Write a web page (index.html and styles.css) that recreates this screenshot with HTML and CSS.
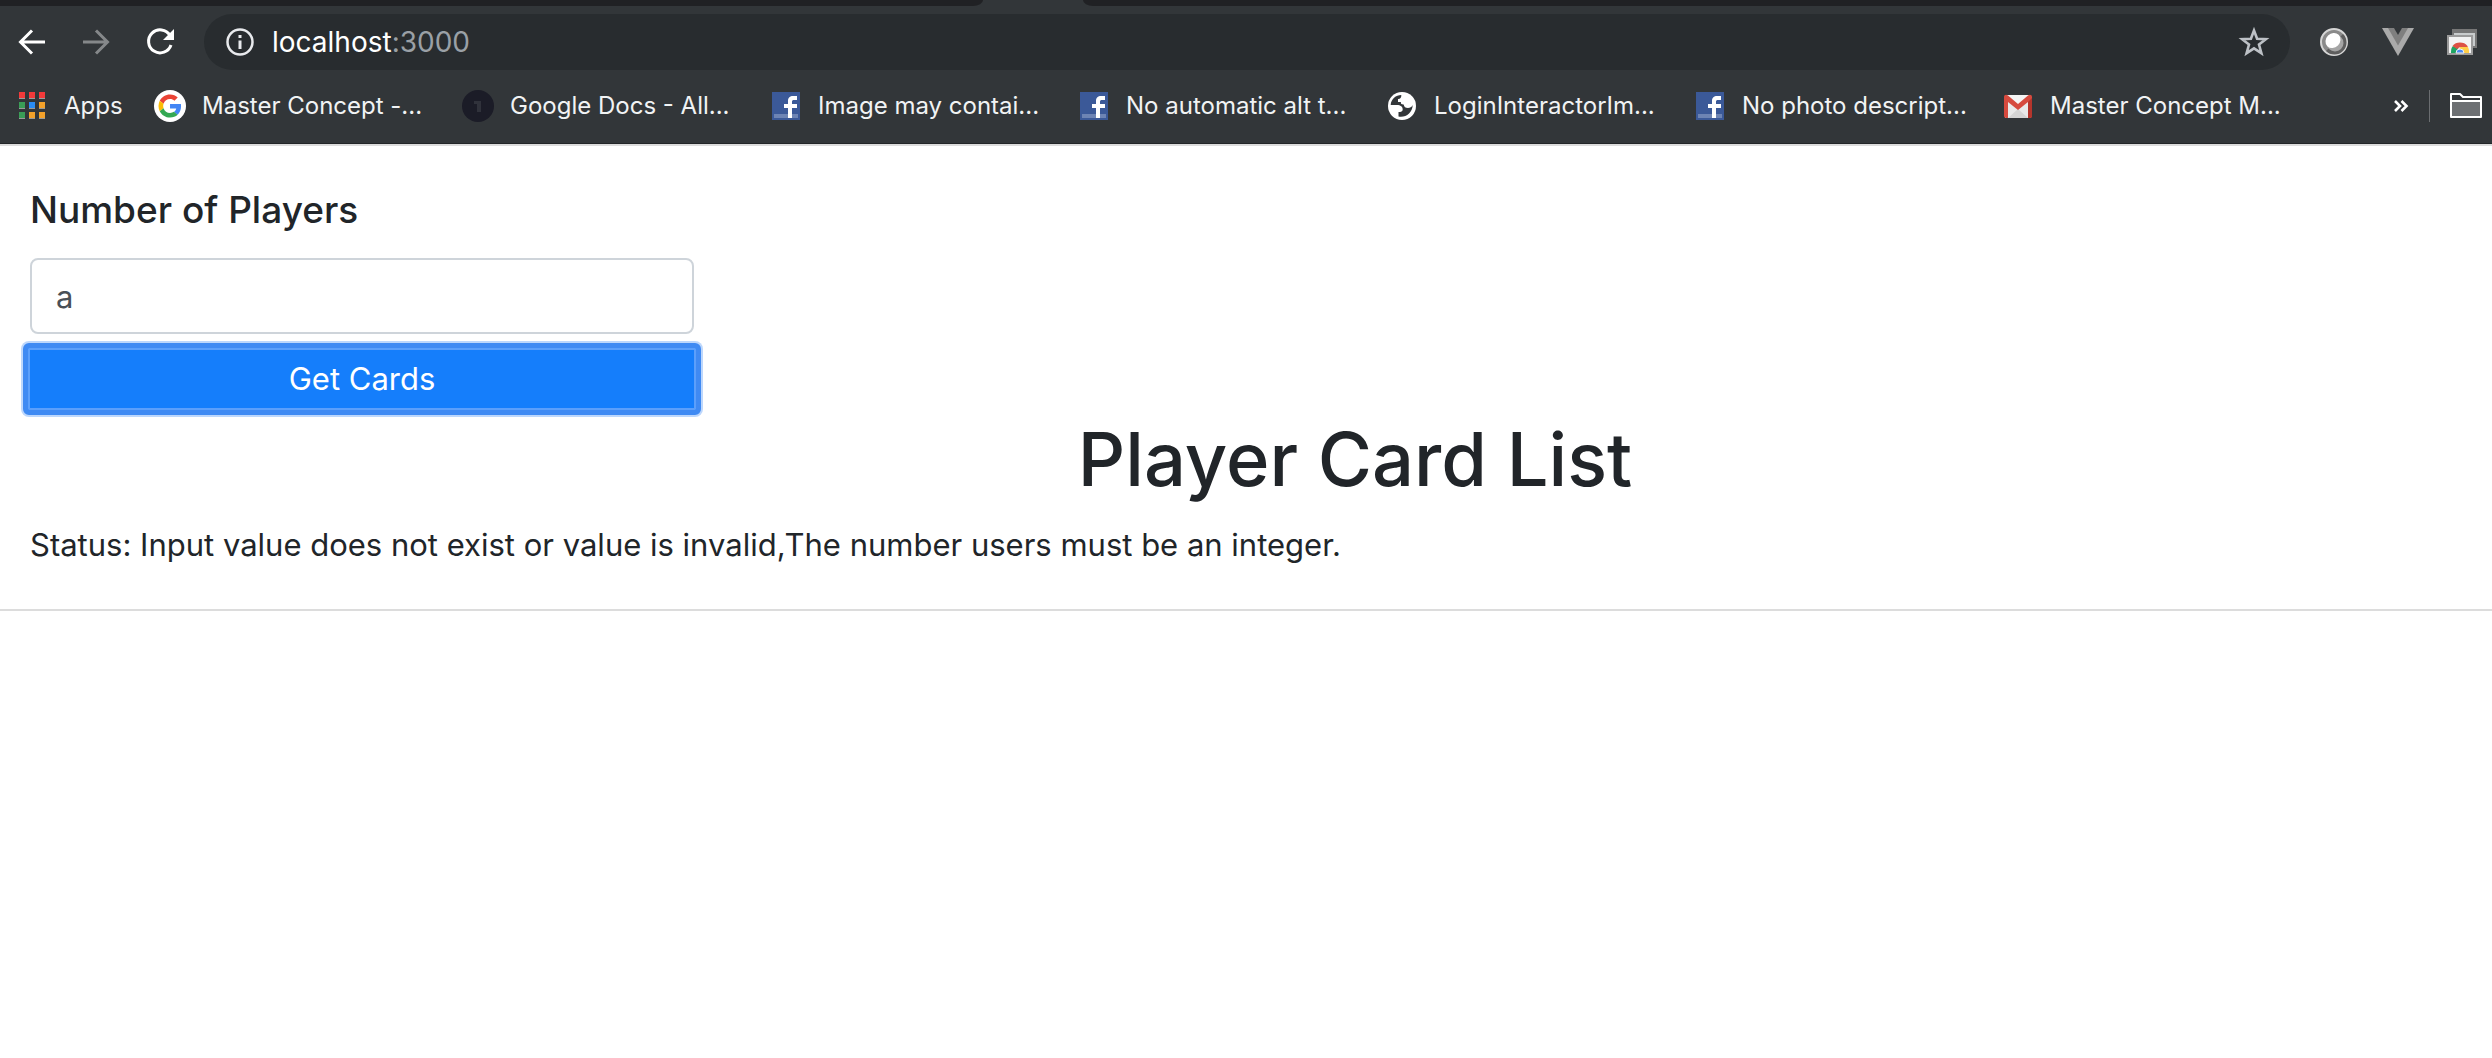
FILE: index.html
```html
<!DOCTYPE html>
<html lang="en">
<head>
<meta charset="utf-8">
<title>Player Card List</title>
<link rel="stylesheet" href="styles.css">
</head>
<body>
<svg class="sprite" aria-hidden="true">
  <symbol id="facebook" viewBox="0 0 28 28">
    <path fill="#3b5998" d="M0 0h28v28H0z"/>
    <path fill="#6d84b4" d="M2 22h24v4H2z"/>
    <path fill="#fff" d="M16 26V16h-4v-4h4V9c0-3.500 2-5 5-5h4v4h-3c-1.500 0-2 .5-2 2v2h5v4h-5v10z"/>
  </symbol>
</svg>
<header class="browser">
  <div class="tabstrip"><div class="tabs-before"></div><div class="tabs-after"></div></div>
  <div class="toolbar">
    <button class="tool" type="button" aria-label="Back">
      <svg width="32" height="32" viewBox="0 0 32 32" fill="none" stroke="#fff" stroke-width="3"><path d="M29 16H5M16 4.500 4.500 16 16 27.500"/></svg>
    </button>
    <button class="tool" type="button" aria-label="Forward">
      <svg width="32" height="32" viewBox="0 0 32 32" fill="none" stroke="#85888a" stroke-width="3"><path d="M3 16h24M16 4.500 27.500 16 16 27.500"/></svg>
    </button>
    <button class="tool" type="button" aria-label="Reload">
      <svg width="32" height="32" viewBox="0 0 32 32"><path d="M26 9.500A11.500 11.500 0 1 0 27 19" fill="none" stroke="#fff" stroke-width="3"/><path d="M30 3v11H19z" fill="#fff"/></svg>
    </button>
    <div class="omnibox">
      <svg width="28" height="28" viewBox="0 0 28 28"><circle cx="14" cy="14" r="12.500" fill="none" stroke="#e8eaed" stroke-width="2.500"/><path d="M12.500 7h3v3h-3zM12.500 12.500h3V21h-3z" fill="#e8eaed"/></svg>
      <div class="url" role="textbox" aria-label="Address" contenteditable="true" spellcheck="false">localhost<span class="port">:3000</span></div>
      <button class="star" type="button" aria-label="Bookmark this page">
        <svg width="32" height="32" viewBox="0 0 32 32"><path d="m16 4.500 3.100 8.300 8.800.4-6.900 5.400 2.400 8.600-7.400-4.900-7.400 4.900 2.400-8.600-6.900-5.400 8.800-.4z" fill="none" stroke="#bdc1c6" stroke-width="2.600"/></svg>
      </button>
    </div>
    <div class="extensions">
      <button class="tool" type="button" aria-label="Lens extension">
        <svg width="32" height="32" viewBox="0 0 32 32"><circle cx="16" cy="16" r="13" fill="#8a8a8a" stroke="#d5d5d5" stroke-width="2"/><path d="M25 8a12 12 0 0 1-17 17z" fill="#5e5e5e"/><circle cx="17" cy="17" r="8.500" fill="#a5a5a5"/><ellipse cx="15" cy="14.500" rx="8" ry="7" fill="#fff" transform="rotate(-45 15 14.500)"/></svg>
      </button>
      <button class="tool" type="button" aria-label="Vue extension">
        <svg width="32" height="32" viewBox="0 0 32 32"><path d="M0 2h32L16 30z" fill="#aaa"/><path d="M6 2h20L16 19.500z" fill="#7f7f7f"/><path d="M12 2h8l-4 7z" fill="#323639"/></svg>
      </button>
      <button class="tool" type="button" aria-label="Remote desktop extension">
        <svg width="32" height="32" viewBox="0 0 32 32"><path d="M7 4h23v17H7z" fill="#c9cccd" stroke="#777" stroke-width="2"/><path d="M7 4h23v3H7z" fill="#777"/><path d="M2 10h24v18H2z" fill="#f3f3f3" stroke="#9b9b9b" stroke-width="2"/><path d="M5 27c0-3 0-5 2-7l5 2 2 5z" fill="#1da462"/><path d="M23 27c0-3 0-5-2-7h-7l-1 7z" fill="#ffcd46"/><path d="M6.500 20a9 8 0 0 1 15 0v1H14l-3 2z" fill="#dd5144"/><path d="M10 27a4 4 0 1 1 8 0z" fill="#4c8bf5" stroke="#f3f3f3"/></svg>
      </button>
    </div>
  </div>
  <nav class="bookmarks" aria-label="Bookmarks">
    <a class="apps" href="#">
      <svg width="32" height="32" viewBox="0 0 32 32"><path fill="#9a9a9a" d="M3 8h6v1H3zM13 8h6v1h-6zM23 8h6v1h-6zM3 18h6v1H3zM13 18h6v1h-6zM23 18h6v1h-6zM3 28h6v1H3zM13 28h6v1h-6zM23 28h6v1h-6z"/><path fill="#f23a3a" d="M3 2h6v6H3zM13 2h6v6h-6zM23 2h6v6h-6z"/><path fill="#3a9d57" d="M3 12h6v6H3zM3 22h6v6H3z"/><path fill="#2a8cf4" d="M13 12h6v6h-6z"/><path fill="#f2a12b" d="M23 12h6v6h-6zM13 22h6v6h-6zM23 22h6v6h-6z"/></svg>
      Apps</a>
    <a class="bookmark" href="#">
      <svg width="32" height="32" viewBox="0 0 32 32"><circle cx="16" cy="16" r="16" fill="#fff"/><g transform="translate(4.500 4.500) scale(.48)"><path fill="#ea4335" d="M24 9.500c3.540 0 6.710 1.220 9.210 3.600l6.850-6.850C35.900 2.380 30.470 0 24 0 14.620 0 6.510 5.380 2.560 13.220l7.980 6.190C12.430 13.720 17.740 9.500 24 9.500z"/><path fill="#4285f4" d="M46.980 24.550c0-1.570-.15-3.090-.38-4.550H24v9.020h12.940c-.58 2.960-2.260 5.480-4.780 7.180l7.730 6c4.510-4.180 7.090-10.360 7.090-17.650z"/><path fill="#fbbc05" d="M10.530 28.590A14.500 14.500 0 0 1 9.770 24c0-1.600.27-3.140.76-4.590l-7.980-6.190A23.900 23.900 0 0 0 0 24c0 3.880.92 7.540 2.560 10.780z"/><path fill="#34a853" d="M24 48c6.480 0 11.930-2.130 15.890-5.810l-7.730-6c-2.150 1.450-4.920 2.300-8.160 2.300-6.260 0-11.570-4.220-13.470-9.910l-7.980 6.190C6.510 42.620 14.620 48 24 48z"/></g></svg>
      Master Concept -...</a>
    <a class="bookmark" href="#">
      <svg width="32" height="32" viewBox="0 0 32 32"><circle cx="16" cy="16" r="16" fill="#1b1c27"/><path d="M12 11h7v11h-4v-8h-3z" fill="#30323b"/></svg>
      Google Docs - All...</a>
    <a class="bookmark" href="#"><svg width="32" height="32" viewBox="-2 -2 32 32"><use href="#facebook" width="28" height="28"/></svg>
      Image may contai...</a>
    <a class="bookmark" href="#"><svg width="32" height="32" viewBox="-2 -2 32 32"><use href="#facebook" width="28" height="28"/></svg>
      No automatic alt t...</a>
    <a class="bookmark" href="#">
      <svg width="32" height="32" viewBox="0 0 32 32"><circle cx="16" cy="16" r="14" fill="#fff"/><path d="M15.300 5C10 5 5 9 4.700 15H11c3.500 0 5.700 1.500 5.700 4.500 0 2-1.700 2.500-4.200 2.500v4.500c7 1.500 14-3.500 14.200-11.500-1.200 2.200-2.700 3-4.700 3-2.500 0-4-1-4.300-3.500-2.700 0-3.200-1-2.700-2.500h-3V9c1.500 0 3.500-.5 3.300-4z" fill="#323639"/></svg>
      LoginInteractorIm...</a>
    <a class="bookmark" href="#"><svg width="32" height="32" viewBox="-2 -2 32 32"><use href="#facebook" width="28" height="28"/></svg>
      No photo descript...</a>
    <a class="bookmark" href="#">
      <svg width="32" height="32" viewBox="0 0 32 32"><path d="M3 5h26v23H3z" fill="#e9e9e9"/><path d="m6 28 10-9 10 9z" fill="#d5d5d5"/><path d="M5 5h22L16 15z" fill="#f5f5f5"/><path d="M2 7c0-2 2-3 4-1.500l10 8.500 10-8.500C28 4 30 5 30 7v19c0 1-1 2-2 2h-2V12l-10 8L6 12v16H4c-1 0-2-1-2-2z" fill="#d64a3e"/><path d="M26 12l4-4v18c0 1-1 2-2 2h-2z" fill="#b5352c"/></svg>
      Master Concept M...</a>
    <div class="bookmarks-end">
      <button class="overflow" type="button" aria-label="More bookmarks"><svg width="16" height="16" viewBox="0 0 16 16" fill="none" stroke="#fff" stroke-width="2.600"><path d="m2 3 5 5-5 5M8.500 3l5 5-5 5"/></svg></button>
      <button class="folder" type="button" aria-label="Other bookmarks"><svg width="32" height="32" viewBox="0 0 32 32"><path d="M1 4h9l3 3h18v20H1z" fill="#323639" stroke="#fff" stroke-width="2" stroke-linejoin="round"/><path d="M2 11h28v15H2z" fill="#6d7073"/><path d="M1 11h30" stroke="#fff" stroke-width="2"/></svg></button>
    </div>
  </nav>
</header>
<main class="page">
  <form class="players">
    <label class="players-label" for="players">Number of Players</label>
    <input class="players-input" id="players" type="text" value="a">
    <button class="players-submit" type="button">Get Cards</button>
  </form>
  <h1 class="title">Player Card List</h1>
  <p class="status">Status: Input value does not exist or value is invalid,The number users must be an integer.</p>
</main>
</body>
</html>
```
FILE: styles.css
```css
* { box-sizing: border-box; }

body {
  margin: 0;
  background: #fff;
  color: #212529;
  font-family: Inter, "Liberation Sans", sans-serif;
  font-size: 31px;
  line-height: 48px;
}

button {
  margin: 0;
  padding: 0;
  border: 0;
  background: none;
  font: inherit;
}

svg { display: block; flex: none; }

.sprite { position: absolute; width: 0; height: 0; }

/* Browser frame */
.browser {
  overflow: hidden;
  background: #323639;
  border-bottom: 2px solid #dcdcdc;
  box-shadow: inset 0 -1px #222528;
}

.tabstrip { display: flex; gap: 100px; height: 6px; }
.tabs-before,
.tabs-after { background: #202124; }
.tabs-before { flex: 983; border-bottom-right-radius: 10px 6px; }
.tabs-after { flex: 1409; border-bottom-left-radius: 10px 6px; }

.toolbar {
  display: flex;
  align-items: center;
  gap: 32px;
  padding: 8px 14px 8px 16px;
}

.omnibox {
  display: flex;
  flex: 1;
  align-items: center;
  height: 56px;
  margin-left: -4px;
  padding: 0 20px 0 22px;
  border-radius: 28px;
  background: #282c2f;
}

.url {
  flex: 1;
  margin-left: 18px;
  color: #fff;
  font-size: 28px;
  line-height: 40px;
  outline: 0;
}
.port { color: #9aa0a6; }

.extensions { display: flex; gap: 32px; margin-left: -4px; }

.bookmarks {
  display: flex;
  align-items: center;
  gap: 32px;
  height: 68px;
  padding: 0 10px 8px 16px;
  margin-top: -2px;
  color: #f1f3f4;
  font-size: 24px;
  line-height: 32px;
  white-space: nowrap;
}

.apps,
.bookmark {
  display: flex;
  flex: none;
  align-items: center;
  gap: 16px;
  color: inherit;
  text-decoration: none;
}
.apps { width: 106px; }
.bookmark { width: 276px; }

.bookmarks-end {
  display: flex;
  align-items: center;
  margin-left: auto;
}
.overflow { padding-right: 20px; }
.folder { padding-left: 20px; border-left: 1px solid #6a6d70; }

/* Page */
.page {
  padding: 40px 30px;
  border-bottom: 2px solid #dcdcdc;
}

.players {
  display: flex;
  flex-direction: column;
  max-width: 664px;
}

.players-label {
  margin-bottom: 24px;
  font-size: 37px;
  font-weight: 500;
}

.players-input {
  width: 100%;
  height: 76px;
  padding: 0 24px;
  border: 2px solid #ced4da;
  border-radius: 8px;
  background: #fff;
  color: #495057;
  font: inherit;
}

/* Button drawn with its keyboard focus ring */
.players-submit {
  height: 72px;
  margin: 9px -7px 0;
  border: 5px solid #3f8af3;
  border-radius: 6px;
  background: #157efb;
  box-shadow: 0 0 0 2px #bdd7fc, inset 0 0 0 2px #5b9ffb;
  color: #fff;
}

.title {
  margin: 0;
  padding-left: 218px;
  font-size: 74px;
  font-weight: 500;
  line-height: 88px;
  text-align: center;
}

.status { margin: 18px 0 0; }
```
